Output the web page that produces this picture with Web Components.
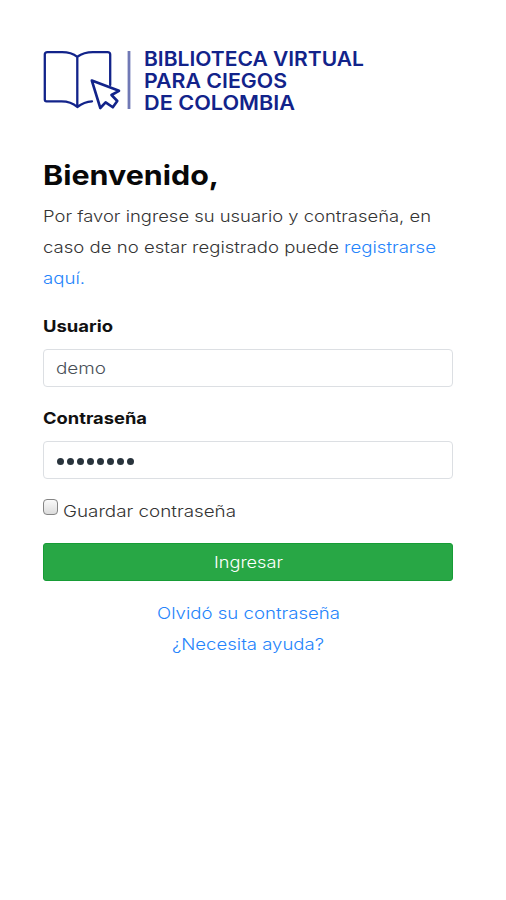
<!DOCTYPE html>
<html lang="es">
<head>
<meta charset="utf-8">
<title>Biblioteca Virtual para Ciegos de Colombia</title>
<style>
body { margin: 0; background: #fff; font-family: Inter, "Open Sans", sans-serif; }
</style>
</head>
<body>
<login-page></login-page>
<script>
const define = (name, html, setup) => customElements.define(name, class extends HTMLElement {
  constructor() {
    super();
    this.attachShadow({ mode: 'open' }).innerHTML = html;
  }
  connectedCallback() { if (setup) setup(this, this.shadowRoot); }
});

/* One line of text, widened to the measure given in "w". */
define('text-line', `
<style>
:host { display: inline-block; white-space: nowrap; vertical-align: top; }
span { display: inline-block; transform-origin: 0 50%; }
</style><span><slot></slot></span>`, (el, root) => {
  const w = Number(el.getAttribute('w'));
  const span = root.querySelector('span');
  span.style.transform = `scaleX(${w / span.getBoundingClientRect().width})`;
  el.style.width = w + 'px';
});

define('brand-logo', `
<style>
:host { display: flex; height: 60px; color: #12238a; }
svg { width: 101px; height: 60px; flex: none; }
.name { font-size: 20px; font-weight: 600; line-height: 22px; display: flex; flex-direction: column; margin-top: -2px; }
</style>
<svg viewBox="0 0 101 60" fill="none" stroke="#12238a" stroke-width="2.3" stroke-linejoin="round" stroke-linecap="round">
<path d="M34.3 6.8C30 3.4 24 2.1 19 2.1H4.5Q1.8 2.1 1.8 4.5V49.5Q1.8 51.3 3.5 51.3H18.5C25 51.3 30 53.2 34.3 57C38.5 53.7 42.5 51.6 49 51.3M34.3 6.8V57M34.3 6.8C39 3.4 44.5 2.1 50 2.1H64.5Q67.2 2.1 67.2 4.5V35"/>
<path d="M48.8 30.5L76 40.8L68.5 45L74.3 51L69.8 57.3L62.6 52.4L57.3 58Z" fill="#fff" stroke-width="2.6"/>
<path d="M86 1V59" stroke="#7079b5" stroke-width="2.8" stroke-linecap="butt"/>
</svg>
<div class="name"><text-line w="220">BIBLIOTECA VIRTUAL</text-line><text-line w="143">PARA CIEGOS</text-line><text-line w="151">DE COLOMBIA</text-line></div>`);

define('form-field', `
<style>
:host { display: block; }
.label { height: 30px; line-height: 30px; font-size: 16.3px; font-weight: 650; color: #111; }
.box { box-sizing: border-box; height: 38px; margin-top: 8px; border: 1px solid #dcdfe3; border-radius: 4px; padding-left: 12px; line-height: 36px; font-size: 16.5px; font-weight: 300; color: #495057; display: flex; align-items: center; }
</style>
<div class="label"><slot name="label"></slot></div>
<div class="box"><slot></slot></div>`);

define('password-dots', `
<style>
:host { display: flex; gap: 3px; padding: 3px 0 0 1px; }
i { width: 7px; height: 7px; border-radius: 50%; background: #29343d; }
</style>` + '<i></i>'.repeat(8));

define('save-check', `
<style>
:host { display: flex; align-items: flex-start; height: 31px; line-height: 31px; gap: 5px; }
i { box-sizing: border-box; width: 15px; height: 16px; margin-top: 3px; border: 1px solid #858585; border-radius: 4px; background: linear-gradient(#fafafa, #dcdcdc); }
</style><i></i><slot></slot>`);

define('submit-button', `
<style>
:host { display: flex; justify-content: center; box-sizing: border-box; height: 38px; line-height: 37px; border-radius: 3px; background: #28a745; border: 1px solid #179c36; color: #fff; font-size: 16.2px; font-weight: 350; }
</style><slot></slot>`);

define('login-page', `
<style>
:host { display: block; box-sizing: border-box; min-height: 900px; padding: 50px 53px 0 43px; font-size: 16.2px; font-weight: 300; line-height: 31px; color: #343434; }
h1 { margin: 46px 0 0; font-size: 27.5px; line-height: 39px; height: 45px; font-weight: 700; color: #080808; }
p { margin: 0; height: 93px; display: flex; flex-direction: column; }
.row { display: flex; gap: 5px; }
.link { color: #2584fb; }
.user { margin-top: 17px; }
.pass { margin-top: 16px; }
save-check { margin-top: 17px; }
submit-button { margin-top: 16px; }
.help { margin-top: 17px; display: flex; flex-direction: column; align-items: center; }
</style>
<brand-logo></brand-logo>
<h1><text-line w="176">Bienvenido,</text-line></h1>
<p><text-line w="388">Por favor ingrese su usuario y contraseña, en</text-line>
<span class="row"><text-line w="296">caso de no estar registrado puede</text-line><text-line class="link" w="92">registrarse</text-line></span>
<text-line class="link" w="42">aquí.</text-line></p>
<form-field class="user"><text-line slot="label" w="70">Usuario</text-line><text-line w="50">demo</text-line></form-field>
<form-field class="pass"><text-line slot="label" w="104">Contraseña</text-line><password-dots></password-dots></form-field>
<save-check><text-line w="173">Guardar contraseña</text-line></save-check>
<submit-button><text-line w="69">Ingresar</text-line></submit-button>
<div class="help"><text-line class="link" w="183">Olvidó su contraseña</text-line><text-line class="link" w="152">¿Necesita ayuda?</text-line></div>`);
</script>
</body>
</html>
